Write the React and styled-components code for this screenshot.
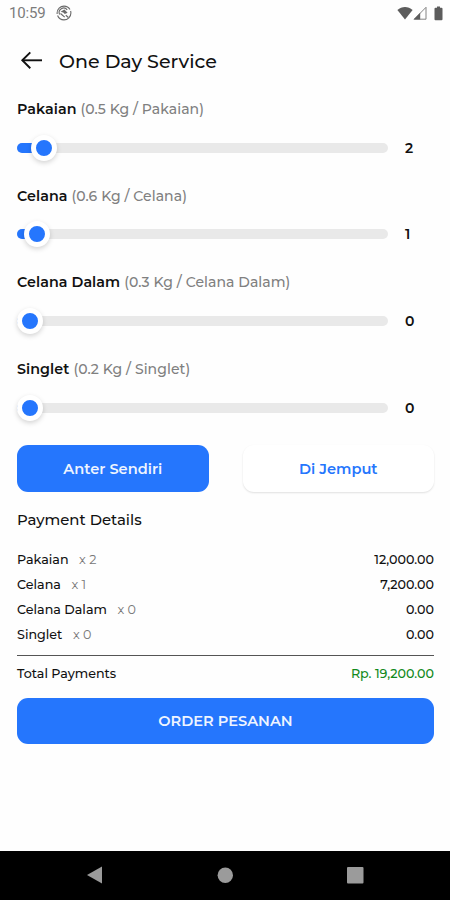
import React, { useState } from 'react';
import styled, { createGlobalStyle } from 'styled-components';

const GlobalStyle = createGlobalStyle`
  * {
    box-sizing: border-box;
  }

  body {
    margin: 0;
    background-color: #fefefe;
    font-family: Montserrat, Inter, 'Liberation Sans', sans-serif;
    color: #111;
  }
`;

const Screen = styled.div`
  height: 900px;
  display: flex;
  flex-direction: column;
  overflow: hidden;
`;

const StatusBar = styled.div`
  height: 26px;
  padding: 0 7px 0 9px;
  display: flex;
  align-items: center;
  justify-content: space-between;
  font-family: Roboto, sans-serif;
  font-size: 15px;
  letter-spacing: -0.15px;
  color: #7c7c7c;
`;

const StatusGroup = styled.div`
  display: flex;
  align-items: center;
  gap: ${props => props.$gap}px;
`;

const BatterySlot = styled.div`
  margin-left: 7px;
  display: flex;
`;

const Header = styled.header`
  height: 70px;
  padding-left: 20px;
  display: flex;
  align-items: center;
  gap: 16px;
`;

const BackButton = styled.button`
  width: 23px;
  height: 20px;
  padding: 0;
  border: none;
  background: none;
  display: flex;
  cursor: pointer;
`;

const Title = styled.h1`
  margin: 0;
  font-size: 19px;
  font-weight: 500;
`;

const Content = styled.main`
  flex: 1;
  padding: 0 16px 0 17px;
`;

const Item = styled.section`
  height: 86.7px;
`;

const ItemLabel = styled.div`
  height: 27px;
  line-height: 27px;
  font-size: 14.3px;
  font-weight: 600;
  letter-spacing: 0.06px;
  white-space: nowrap;
`;

const Weight = styled.span`
  font-size: 14px;
  font-weight: 500;
  color: #808080;
`;

const SliderRow = styled.div`
  height: 27px;
  margin-top: 11.2px;
  display: flex;
  align-items: center;
  gap: 17px;
`;

const Track = styled.div`
  width: 371px;
  height: 10px;
  border-radius: 5px;
  background-color: #e9e9e9;
  display: flex;
  align-items: center;
`;

const Fill = styled.div`
  height: 10px;
  flex: none;
  border-radius: 5px 0 0 5px;
  background-color: #2576fd;
`;

const Thumb = styled.div`
  width: 26px;
  height: 26px;
  flex: none;
  margin-left: -13px;
  border: 5px solid #fff;
  border-radius: 50%;
  background-color: #2576fd;
  box-shadow: 0 2px 5px rgba(0, 0, 0, 0.17);
`;

const Count = styled.span`
  font-size: 14px;
  font-weight: 600;
`;

const Choices = styled.div`
  margin-top: 2.5px;
  display: grid;
  grid-template-columns: 1fr 1fr;
  gap: 34px;
`;

const Button = styled.button`
  width: 100%;
  height: 46.5px;
  border: none;
  border-radius: 11px;
  font-family: inherit;
  font-size: 14.6px;
  font-weight: 600;
  cursor: pointer;
  color: ${props => props.$outline ? '#2576fd' : '#eef4ff'};
  background-color: ${props => props.$outline ? '#fff' : '#2576fd'};
  box-shadow: ${props => props.$outline ? '0 1px 2px rgba(0, 0, 0, 0.12)' : 'none'};
`;

const SectionTitle = styled.h2`
  height: 28px;
  margin: 14.5px 0 13px;
  line-height: 28px;
  font-size: 14.9px;
  font-weight: 500;
`;

const Line = styled.div`
  height: 25px;
  display: flex;
  align-items: center;
  justify-content: space-between;
  font-size: 12.7px;
  font-weight: 500;
`;

const Quantity = styled.span`
  margin-left: 10.5px;
  font-weight: 400;
  color: #777;
`;

const Price = styled.span`
  color: ${props => props.$total ? '#128a1c' : 'inherit'};
`;

const Divider = styled.hr`
  height: 1.5px;
  margin: 7.3px 0 4.7px;
  border: none;
  background-color: #555;
`;

const OrderArea = styled.div`
  margin-top: 12px;
`;

const NavigationBar = styled.nav`
  height: 49.5px;
  padding: 0 86px;
  display: flex;
  align-items: center;
  justify-content: space-between;
  background-color: #000;
`;

const ITEMS = [
  { name: 'Pakaian', weight: '0.5', price: 6000, count: 2 },
  { name: 'Celana', weight: '0.6', price: 7200, count: 1 },
  { name: 'Celana Dalam', weight: '0.3', price: 3000, count: 0 },
  { name: 'Singlet', weight: '0.2', price: 2000, count: 0 },
];

const formatPrice = (value) =>
  value.toLocaleString('en-US', { minimumFractionDigits: 2 });

const NoSyncIcon = () => (
  <svg width="16" height="16" viewBox="0 0 16 16" fill="none" stroke="#6a6a6a">
    <circle cx="8" cy="8" r="6.9" strokeWidth="1.1" strokeDasharray="19 1.5" />
    <path d="M3.6 9.5A4.5 4.5 0 0 1 11.2 4.8" strokeWidth="1.1" />
    <path d="M4.6 6.8L8.4 4.6l3.2 3.2-2.8 1.2-1.5-1.6z" fill="#6a6a6a" stroke="none" />
    <path d="M4.5 8.5l4.2 3.6M9.8 10.3l2.6 2.2" strokeWidth="1.2" />
  </svg>
);

const WifiIcon = () => (
  <svg width="16" height="14" viewBox="0 0 16 14">
    <path d="M0.4 4C4.8 0 11.2 0 15.6 4L8 13.4z" fill="#5c5c5c" />
  </svg>
);

const SignalIcon = () => (
  <svg width="14" height="14" viewBox="0 0 14 14">
    <path d="M1.3 13.2L13 1.3v11.9z" fill="none" stroke="#777" strokeWidth="0.9" />
    <path d="M0.5 13.5L7.2 6.7v6.8z" fill="#5c5c5c" />
  </svg>
);

const BatteryIcon = () => (
  <svg width="9" height="15" viewBox="0 0 9 15">
    <path d="M3 0.5h3v1.3h1.5a1 1 0 0 1 1 1v10.5a1 1 0 0 1-1 1h-6a1 1 0 0 1-1-1V2.8a1 1 0 0 1 1-1H3z" fill="#5c5c5c" />
  </svg>
);

const ArrowIcon = () => (
  <svg width="23" height="20" viewBox="0 0 23 20" fill="none" stroke="#111" strokeWidth="1.9">
    <path d="M10.3 1.3L2.3 9.3l8 7.9" />
    <path d="M2.5 9.3H22" />
  </svg>
);

const App = () => {
  const [delivery, setDelivery] = useState('self');
  const total = ITEMS.reduce((sum, item) => sum + item.price * item.count, 0);

  return (
    <Screen>
      <GlobalStyle />
      <StatusBar>
        <StatusGroup $gap={10}>
          <span>10:59</span>
          <NoSyncIcon />
        </StatusGroup>
        <StatusGroup $gap={0}>
          <WifiIcon />
          <SignalIcon />
          <BatterySlot>
            <BatteryIcon />
          </BatterySlot>
        </StatusGroup>
      </StatusBar>

      <Header>
        <BackButton aria-label="Back">
          <ArrowIcon />
        </BackButton>
        <Title>One Day Service</Title>
      </Header>

      <Content>
        {ITEMS.map(item => (
          <Item key={item.name}>
            <ItemLabel>
              {item.name} <Weight>({item.weight} Kg / {item.name})</Weight>
            </ItemLabel>
            <SliderRow>
              <Track>
                <Fill style={{ width: 13 + item.count * 7 }} />
                <Thumb />
              </Track>
              <Count>{item.count}</Count>
            </SliderRow>
          </Item>
        ))}

        <Choices>
          <Button $outline={delivery !== 'self'} onClick={() => setDelivery('self')}>
            Anter Sendiri
          </Button>
          <Button $outline={delivery !== 'pickup'} onClick={() => setDelivery('pickup')}>
            Di Jemput
          </Button>
        </Choices>

        <SectionTitle>Payment Details</SectionTitle>
        {ITEMS.map(item => (
          <Line key={item.name}>
            <span>
              {item.name}
              <Quantity>x {item.count}</Quantity>
            </span>
            <Price>{formatPrice(item.price * item.count)}</Price>
          </Line>
        ))}
        <Divider />
        <Line>
          <span>Total Payments</span>
          <Price $total>Rp. {formatPrice(total)}</Price>
        </Line>
        <OrderArea>
          <Button>ORDER PESANAN</Button>
        </OrderArea>
      </Content>

      <NavigationBar>
        <svg width="18" height="18" viewBox="0 0 18 18">
          <path d="M1 9L16 0.5v17z" fill="#9b9b9b" />
        </svg>
        <svg width="18" height="18" viewBox="0 0 18 18">
          <circle cx="9.3" cy="9.3" r="7.7" fill="#9b9b9b" />
        </svg>
        <svg width="18" height="18" viewBox="0 0 18 18">
          <rect x="1" y="1" width="16.5" height="16.5" rx="1" fill="#9b9b9b" />
        </svg>
      </NavigationBar>
    </Screen>
  );
};

export default App;
